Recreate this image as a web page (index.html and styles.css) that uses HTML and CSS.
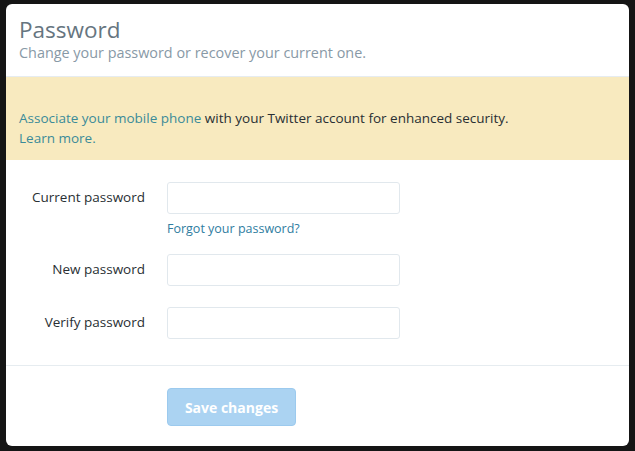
FILE: index.html
```html
<!DOCTYPE html>
<html>
<head>
  <meta charset="UTF-8">
  <title>Password</title>
  <link rel="stylesheet" href="styles.css">
</head>
<body>
  <div class="card">
    <div class="header">
      <h1>Password</h1>
      <p>Change your password or recover your current one.</p>
    </div>
    <div class="notice">
      <a href="#">Associate your mobile phone</a> with your Twitter account for enhanced security.<br>
      <a href="#">Learn more.</a>
    </div>
    <form class="fields">
      <div class="row">
        <label for="current">Current password</label>
        <div class="control">
          <input type="password" id="current">
          <a href="#" class="forgot">Forgot your password?</a>
        </div>
      </div>
      <div class="row">
        <label for="newpw">New password</label>
        <div class="control"><input type="password" id="newpw"></div>
      </div>
      <div class="row">
        <label for="verify">Verify password</label>
        <div class="control"><input type="password" id="verify"></div>
      </div>
    </form>
    <div class="actions">
      <button type="button" disabled>Save changes</button>
    </div>
  </div>
</body>
</html>
```

FILE: styles.css
```css
html, body { height: 100%; }
body {
  margin: 0;
  background: #151515;
  font-family: "Open Sans", Arial, sans-serif;
  padding: 4px 6px 4px 6px;
  box-sizing: border-box;
}
.card {
  background: #fff;
  border-radius: 6px;
  width: 623px;
  height: 442px;
  overflow: hidden;
}
.header { padding: 12px 13px 0 13px; height: 60px; border-bottom: 1px solid #e6ecf0; }
.header h1 { margin: 0; font-size: 22.5px; font-weight: 400; color: #66757f; line-height: 28px; }
.header p { margin: 0; font-size: 14.4px; color: #8899a6; line-height: 18px; }
.notice {
  background: #f8eabf;
  height: 83px;
  box-sizing: border-box;
  padding: 31px 13px 0;
  font-size: 13.5px;
  line-height: 20px;
  color: #292f33;
}
a { color: #2b7bb9; text-decoration: none; }
.notice a { color: #3b8b99; }
.fields {
  padding: 22px 0 26px;
  border-bottom: 1px solid #e6ecf0;
  display: flex;
  flex-direction: column;
  gap: 21px;
}
.row { display: flex; align-items: flex-start; }
.row label {
  width: 139px;
  text-align: right;
  padding-right: 22px;
  font-size: 13.5px;
  color: #292f33;
  line-height: 31px;
}
.control { display: flex; flex-direction: column; }
.control input {
  width: 233px;
  height: 32px;
  box-sizing: border-box;
  border: 1px solid #e1e8ed;
  border-radius: 3px;
  margin: 0;
}
.forgot { font-size: 12.5px; margin: 8px 0 -3px; line-height: 14px; color: #2f7d9f; }
.actions { padding: 22px 0 0 161px; }
.actions button {
  width: 129px;
  height: 38px;
  background: #abd3f2;
  border: 1px solid #9ccaee;
  border-radius: 4px;
  color: #fff;
  font-family: "Open Sans", Arial, sans-serif;
  font-weight: 700;
  font-size: 14px;
}
```
